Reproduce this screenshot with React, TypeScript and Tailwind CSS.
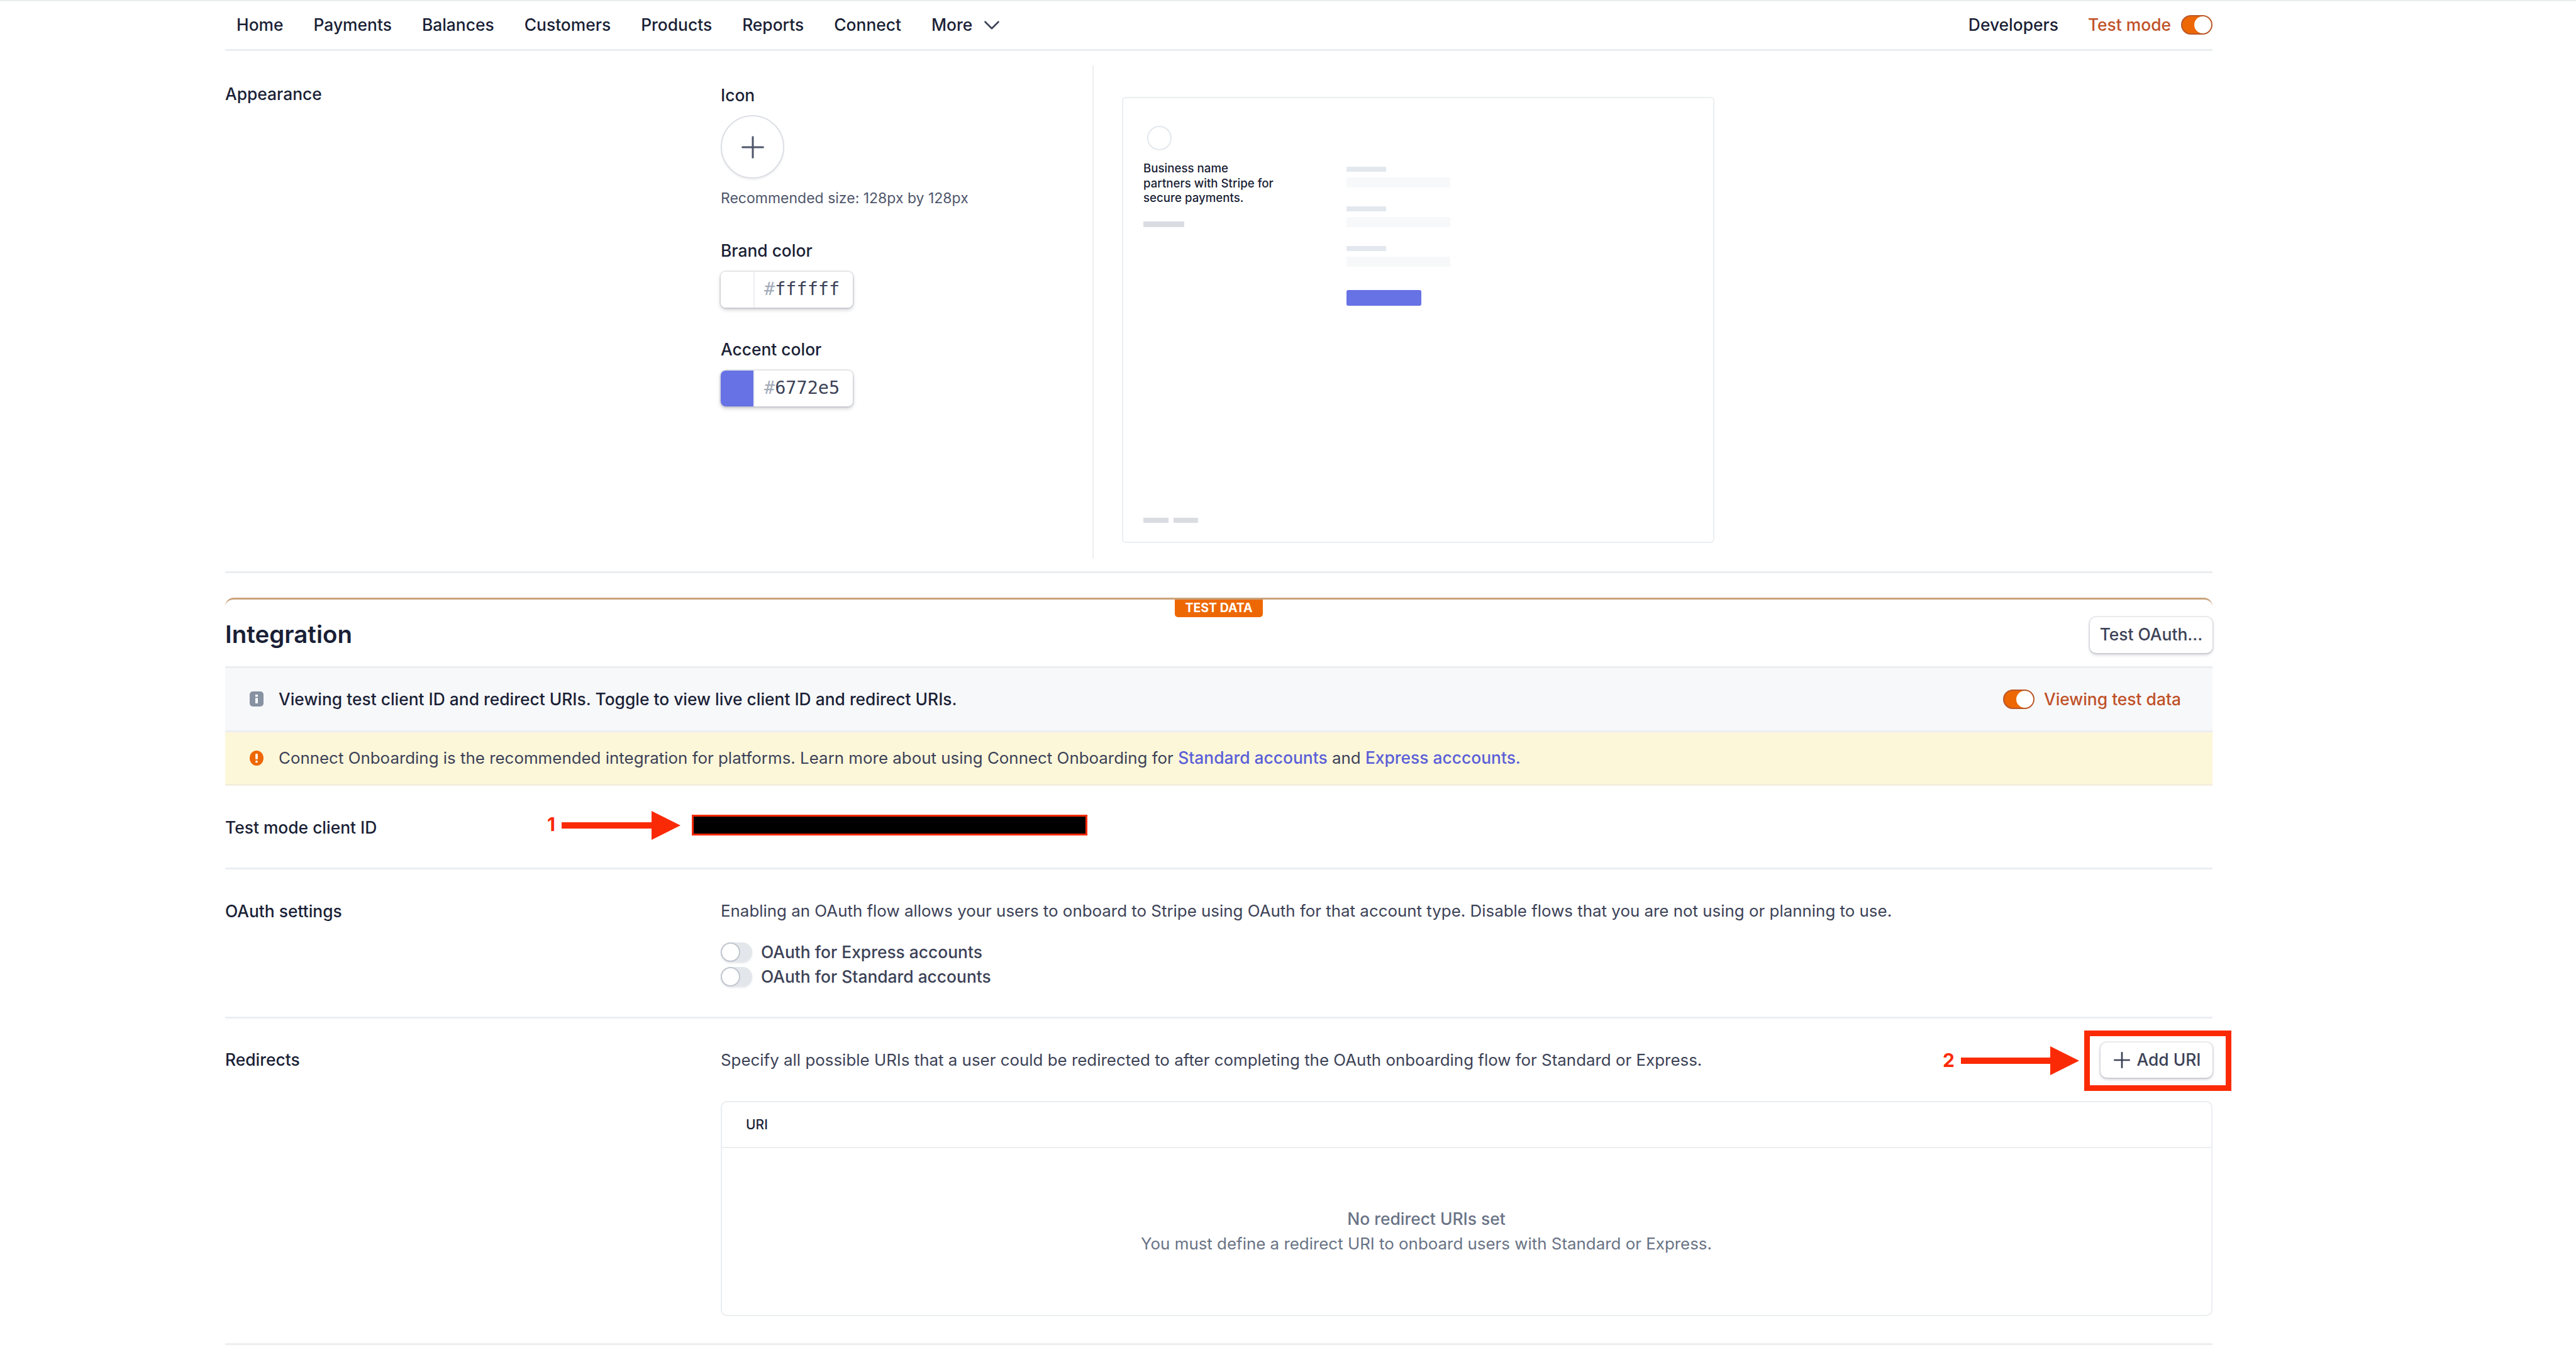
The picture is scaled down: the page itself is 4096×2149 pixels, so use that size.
import { ChevronDown, Plus } from "lucide-react";

const navItems = ["Home", "Payments", "Balances", "Customers", "Products", "Reports", "Connect"];

const Toggle = ({ on }: { on: boolean }) => {
  if (on) {
    return (
      <span className="flex h-[31px] w-[50px] shrink-0 justify-end rounded-full border-2 border-[#b9572a] bg-[#ed6804]">
        <span className="h-full w-[27px] rounded-full bg-white" />
      </span>
    );
  }
  return (
    <span className="flex h-[31px] w-[50px] shrink-0 rounded-full bg-[#e3e6ea] shadow-[0_2px_3px_rgba(60,66,87,0.12)]">
      <span className="h-full w-[31px] rounded-full border-2 border-[#c1c6cf] bg-white" />
    </span>
  );
};

const Swatch = ({ color, value }: { color: string; value: string }) => (
  <div className="mt-[16px] flex h-[57px] w-[210px] overflow-hidden rounded-[8px] bg-white shadow-[0_0_0_2px_rgba(60,66,87,0.1),0_3px_6px_rgba(60,66,87,0.28)]">
    <span className={`w-[54px] border-r-2 border-[#ebeef1] ${color}`} />
    <span className="flex flex-1 items-center pl-[15px] font-['DejaVu_Sans_Mono',monospace] text-[28.5px] text-[#3c4257]">
      <span className="text-[#a3acb9]">#</span>
      {value}
    </span>
  </div>
);

const Arrow = ({ lineWidth, className }: { lineWidth: number; className: string }) => (
  <svg
    className={className}
    width={lineWidth + 46}
    height={46}
    viewBox={`0 0 ${lineWidth + 46} 46`}
    fill="#fb2a06"
  >
    <rect x="0" y="18" width={lineWidth + 2} height="10" />
    <polygon points={`${lineWidth},0 ${lineWidth + 46},23 ${lineWidth},46`} />
  </svg>
);

const PreviewField = () => (
  <div className="mb-[30px]">
    <div className="h-[8px] w-[63px] bg-[#e3e8ee]" />
    <div className="mt-[9px] h-[16px] w-[165px] bg-[#f7f8f9]" />
  </div>
);

export default function App() {
  return (
    <div className="min-h-screen w-[4096px] overflow-hidden bg-white font-['Inter',sans-serif] text-[25.9px] text-[#1a1f36]">
      <div className="h-[2px] bg-[#ebeef1]" />
      <div className="mx-[358px] w-[3160px]">
        <nav className="flex h-[79px] items-center justify-between border-b-[3px] border-[#ebeef1] pl-[18px] text-[26.4px] font-medium">
          <div className="flex items-center gap-[48px]">
            {navItems.map((item) => (
              <span key={item}>{item}</span>
            ))}
            <span className="flex items-center gap-[10px]">
              More
              <ChevronDown size={42} strokeWidth={1.5} className="text-[#3c4257]" />
            </span>
          </div>
          <div className="flex items-center gap-[47px]">
            <span>Developers</span>
            <span className="flex items-center gap-[16px] text-[#bf5128]">
              Test mode
              <Toggle on />
            </span>
          </div>
        </nav>

        <section className="flex h-[830px] border-b-[3px] border-[#ebeef1] pt-[23px]">
          <div className="w-[788px] pt-[27px] text-[26.4px] font-medium leading-[36px]">Appearance</div>
          <div className="w-[591px] pt-[29px] text-[26.4px] font-medium">
            <div className="leading-[36px]">Icon</div>
            <div className="mt-[14px] flex h-[101px] w-[101px] items-center justify-center rounded-full border-2 border-[#dcdfe4] shadow-[0_2px_3px_rgba(60,66,87,0.08)]">
              <Plus size={56} strokeWidth={1.3} className="text-[#4f566b]" />
            </div>
            <div className="mt-[16px] text-[23px] font-normal leading-[30px] text-[#4f566b]">
              Recommended size: 128px by 128px
            </div>
            <div className="mt-[50px] leading-[36px]">Brand color</div>
            <Swatch color="bg-white" value="ffffff" />
            <div className="mt-[48px] leading-[36px]">Accent color</div>
            <Swatch color="bg-[#6772e5]" value="6772e5" />
          </div>
          <div className="h-[784px] border-l-2 border-[#ebeef1] pl-[45px] pt-[50px]">
            <div className="flex h-[709px] w-[942px] flex-col rounded-[6px] border-2 border-[#ebeef1] px-[32px] pb-[30px] pt-[44px]">
              <div className="flex flex-1">
                <div className="w-[323px]">
                  <div className="ml-[6px] h-[39px] w-[39px] rounded-full border-2 border-[#e3e8ee]" />
                  <p className="mt-[17px] text-[18.7px] font-medium leading-[23.6px]">
                    Business name
                    <br />
                    partners with Stripe for
                    <br />
                    secure payments.
                  </p>
                  <div className="mt-[25px] h-[9px] w-[65px] bg-[#d9dce1]" />
                </div>
                <div className="pt-[65px]">
                  <PreviewField />
                  <PreviewField />
                  <PreviewField />
                  <div className="mt-[37px] h-[25px] w-[119px] rounded-[3px] bg-[#6772e5]" />
                </div>
              </div>
              <div className="flex gap-[8px]">
                <div className="h-[8px] w-[40px] bg-[#d9dce1]" />
                <div className="h-[8px] w-[39px] bg-[#d9dce1]" />
              </div>
            </div>
          </div>
        </section>

        <section className="relative mt-[39px] rounded-t-[14px] border-t-[3px] border-[#c9a27c]">
          <div className="absolute left-1/2 top-0 flex h-[28px] w-[140px] -translate-x-1/2 items-center justify-center rounded-b-[5px] bg-[#ed6804] text-[19.5px] font-bold text-white">
            TEST DATA
          </div>

          <div className="flex h-[106px] items-center justify-between pt-[6px]">
            <h2 className="text-[38.5px] font-semibold">Integration</h2>
            <button className="flex h-[57px] w-[195px] items-center justify-center rounded-[10px] bg-white text-[26.4px] font-medium text-[#3c4257] shadow-[0_0_0_2px_rgba(60,66,87,0.1),0_3px_5px_rgba(60,66,87,0.22)]">
              Test OAuth...
            </button>
          </div>

          <div className="flex h-[105px] items-center justify-between border-y-[3px] border-[#ebeef1] bg-[#f7f8fa] pl-[39px] pr-[50px] text-[26.4px] font-medium">
            <div className="flex items-center gap-[24px]">
              <svg width="22" height="24" viewBox="0 0 22 24">
                <rect width="22" height="24" rx="5" fill="#8792a2" />
                <rect x="9" y="5" width="4" height="3.5" fill="#fff" />
                <rect x="9" y="10.5" width="4" height="8.5" fill="#fff" />
              </svg>
              Viewing test client ID and redirect URIs. Toggle to view live client ID and redirect URIs.
            </div>
            <div className="flex items-center gap-[15px] text-[#bf5128]">
              <Toggle on />
              Viewing test data
            </div>
          </div>

          <div className="flex h-[85px] items-center gap-[24px] border-b-[3px] border-[#f3eedd] bg-[#fdf7da] pl-[39px] text-[#3c4257]">
            <svg width="22" height="24" viewBox="0 0 22 24">
              <ellipse cx="11" cy="12" rx="11" ry="12" fill="#ed6804" />
              <rect x="9.2" y="5" width="3.6" height="9" rx="1" fill="#fff" />
              <rect x="9.2" y="16" width="3.6" height="3.2" rx="1" fill="#fff" />
            </svg>
            <span>
              Connect Onboarding is the recommended integration for platforms. Learn more about using Connect
              Onboarding for <span className="text-[26.4px] font-medium text-[#5a5fd8]">Standard accounts</span> and{" "}
              <span className="text-[26.4px] font-medium text-[#5a5fd8]">Express acccounts.</span>
            </span>
          </div>

          <div className="relative flex h-[133px] items-center border-b-[3px] border-[#ebeef1] pt-[4px] text-[26.4px] font-medium">
            Test mode client ID
            <span className="absolute left-[512px] top-[41px] text-[30px] font-bold leading-[40px] text-[#fb2a06]">
              1
            </span>
            <Arrow lineWidth={143} className="absolute left-[535px] top-[40px]" />
            <div className="absolute left-[742px] top-[46px] h-[33px] w-[629px] border-[3px] border-[#fb2a06] bg-black" />
          </div>

          <div className="flex h-[237px] border-b-[3px] border-[#ebeef1] pt-[48px]">
            <div className="w-[788px] text-[26.4px] font-medium leading-[36px]">OAuth settings</div>
            <div className="text-[#3c4257]">
              <p className="leading-[36px]">
                Enabling an OAuth flow allows your users to onboard to Stripe using OAuth for that account type. Disable
                flows that you are not using or planning to use.
              </p>
              <div className="mt-[32px] flex flex-col gap-[8px] text-[26.4px] font-medium leading-[31px]">
                <div className="flex items-center gap-[14px]">
                  <Toggle on={false} />
                  OAuth for Express accounts
                </div>
                <div className="flex items-center gap-[14px]">
                  <Toggle on={false} />
                  OAuth for Standard accounts
                </div>
              </div>
            </div>
          </div>

          <div className="flex h-[519px] border-b-[3px] border-[#ebeef1] pt-[38px]">
            <div className="flex h-[56px] w-[788px] items-center text-[26.4px] font-medium">Redirects</div>
            <div className="flex-1">
              <div className="flex h-[56px] items-center justify-between">
                <p className="text-[#3c4257]">
                  Specify all possible URIs that a user could be redirected to after completing the OAuth onboarding flow
                  for Standard or Express.
                </p>
                <div className="relative">
                  <button className="flex h-[56px] w-[178px] items-center justify-center gap-[9px] rounded-[10px] bg-white text-[26.4px] font-medium text-[#3c4257] shadow-[0_0_0_2px_rgba(60,66,87,0.1),0_3px_5px_rgba(60,66,87,0.22)]">
                    <Plus size={40} strokeWidth={1.6} className="-mx-[5px] text-[#3c4257]" />
                    Add URI
                  </button>
                  <div className="absolute -bottom-[21px] -left-[26px] -right-[30px] -top-[19px] border-[9px] border-[#fb2a06]" />
                  <Arrow lineWidth={142} className="absolute -left-[222px] top-[6px]" />
                  <span className="absolute -left-[251px] top-[8px] text-[30px] font-bold leading-[40px] text-[#fb2a06]">
                    2
                  </span>
                </div>
              </div>
              <div className="mt-[37px] h-[342px] rounded-[10px] border-2 border-[#ebeef1]">
                <div className="flex h-[73px] items-center border-b-2 border-[#ebeef1] pl-[38px] text-[21px] font-medium">
                  URI
                </div>
                <div className="flex flex-col items-center pr-[128px] pt-[92px] leading-[40px] text-[#697386]">
                  <span className="text-[26.4px] font-medium">No redirect URIs set</span>
                  <span>You must define a redirect URI to onboard users with Standard or Express.</span>
                </div>
              </div>
            </div>
          </div>
        </section>
      </div>
    </div>
  );
}
